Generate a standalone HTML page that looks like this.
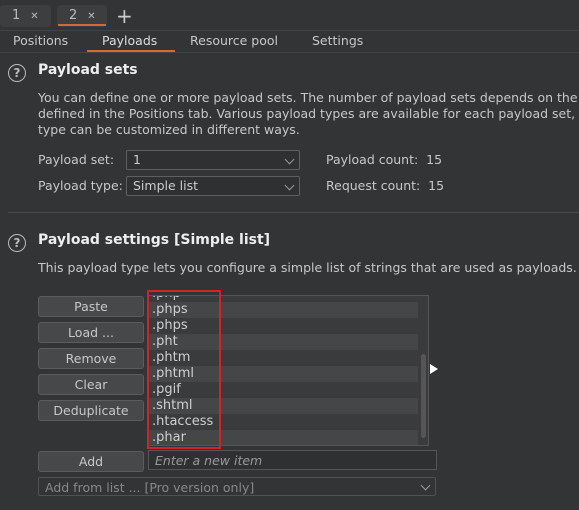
<!DOCTYPE html><html><head><style>
body{margin:0;width:579px;height:510px;background:#333435;font-family:"DejaVu Sans",sans-serif;font-size:12.5px;color:#c8c8c8;position:relative;overflow:hidden}
.a{position:absolute;white-space:nowrap}
.tab{position:absolute;top:5px;height:22px;background:#3d3e40;border-radius:4px;font-size:13px;line-height:22px;color:#bbb}
.btn{position:absolute;left:38px;width:104px;height:19px;background:#46484a;border:1px solid #5a5c5e;border-radius:3px;text-align:center;line-height:19px;color:#c8c8c8}
.sel{position:absolute;height:18px;border:1px solid #5d5f61;background:#2f3032;border-radius:2px;line-height:18px;padding-left:6px;color:#ccc}
.ar{position:absolute;right:6px;top:5px;width:6px;height:6px;border-right:1px solid #999;border-bottom:1px solid #999;transform:rotate(45deg)}
.h{font-weight:bold;font-size:14px;color:#eee}
.q{position:absolute;width:16px;height:16px;border:1.5px solid #bbb;border-radius:50%;text-align:center;line-height:16px;font-size:12px;font-weight:bold;color:#bbb}
.row{height:16px;line-height:16px;padding-left:4px;color:#d0d0d0;font-size:13px}
</style></head><body>
<div class="a" style="left:0;top:0;width:579px;height:30px;background:#333435;border-bottom:1px solid #444"></div>
<div class="tab" style="left:0;width:51px"><span style="margin-left:12px">1</span><span style="margin-left:10px;font-size:10px">✕</span></div>
<div class="tab" style="left:57px;width:50px"><span style="margin-left:12px">2</span><span style="margin-left:10px;font-size:10px">✕</span></div>
<div class="a" style="left:58px;top:24px;width:48px;height:2px;background:#d2693a"></div>
<div class="a" style="left:116px;top:4px;font-size:20px;color:#ccc">+</div>
<div class="a" style="left:13px;top:33px">Positions</div>
<div class="a" style="left:102px;top:33px;color:#ddd">Payloads</div>
<div class="a" style="left:87px;top:50px;width:88px;height:2px;background:#d2693a"></div>
<div class="a" style="left:190px;top:33px">Resource pool</div>
<div class="a" style="left:312px;top:33px">Settings</div>
<div class="a" style="left:0;top:52px;width:579px;height:1px;background:#444"></div>
<div class="q" style="left:8px;top:64px">?</div>
<div class="a h" style="left:38px;top:62px">Payload sets</div>
<div class="a" style="left:38px;top:90px;line-height:16px">You can define one or more payload sets. The number of payload sets depends on the<br>defined in the Positions tab. Various payload types are available for each payload set,<br>type can be customized in different ways.</div>
<div class="a" style="left:38px;top:152px">Payload set:</div>
<div class="sel" style="left:126px;top:150px;width:166px">1<span class="ar"></span></div>
<div class="a" style="left:326px;top:152px">Payload count:&nbsp; 15</div>
<div class="a" style="left:38px;top:178px">Payload type:</div>
<div class="sel" style="left:126px;top:176px;width:166px">Simple list<span class="ar"></span></div>
<div class="a" style="left:326px;top:178px">Request count:&nbsp; 15</div>
<div class="a" style="left:8px;top:212px;width:571px;height:1px;background:#4a4a4a"></div>
<div class="q" style="left:8px;top:234px">?</div>
<div class="a h" style="left:38px;top:232px">Payload settings [Simple list]</div>
<div class="a" style="left:38px;top:260px">This payload type lets you configure a simple list of strings that are used as payloads.</div>
<div class="btn" style="top:296px">Paste</div>
<div class="btn" style="top:322px">Load ...</div>
<div class="btn" style="top:348px">Remove</div>
<div class="btn" style="top:374px">Clear</div>
<div class="btn" style="top:400px">Deduplicate</div>
<div class="a" style="left:147px;top:295px;width:280px;height:149px;border:1px solid #555;overflow:hidden;background:#3a3b3d">
<div style="margin-top:-10px;width:270px">
<div class="row" style="background:#3a3b3d">.php</div>
<div class="row" style="background:#454648">.phps</div>
<div class="row" style="background:#3a3b3d">.phps</div>
<div class="row" style="background:#454648">.pht</div>
<div class="row" style="background:#3a3b3d">.phtm</div>
<div class="row" style="background:#454648">.phtml</div>
<div class="row" style="background:#3a3b3d">.pgif</div>
<div class="row" style="background:#454648">.shtml</div>
<div class="row" style="background:#3a3b3d">.htaccess</div>
<div class="row" style="background:#454648">.phar</div>
</div>
<div class="a" style="right:2px;top:58px;width:5px;height:84px;background:#555;border-radius:3px"></div>
</div>
<div class="a" style="left:147px;top:290px;width:74px;height:159px;border:2px solid #d0242c;box-sizing:border-box"></div>
<div class="a" style="left:430px;top:364px;width:0;height:0;border-left:8px solid #fff;border-top:5px solid transparent;border-bottom:5px solid transparent"></div>
<div class="btn" style="top:451px">Add</div>
<div class="a" style="left:148px;top:450px;height:20px;border:1px solid #555;background:#2f3032;font-style:italic;color:#999;line-height:20px;padding-left:6px;box-sizing:border-box;width:289px">Enter a new item</div>
<div class="a" style="left:38px;top:477px;width:398px;height:19px;border:1px solid #4f5153;border-radius:2px;color:#888;line-height:19px;padding-left:6px;box-sizing:border-box">Add from list ... [Pro version only]<span class="ar" style="top:4px"></span></div>
</body></html>
